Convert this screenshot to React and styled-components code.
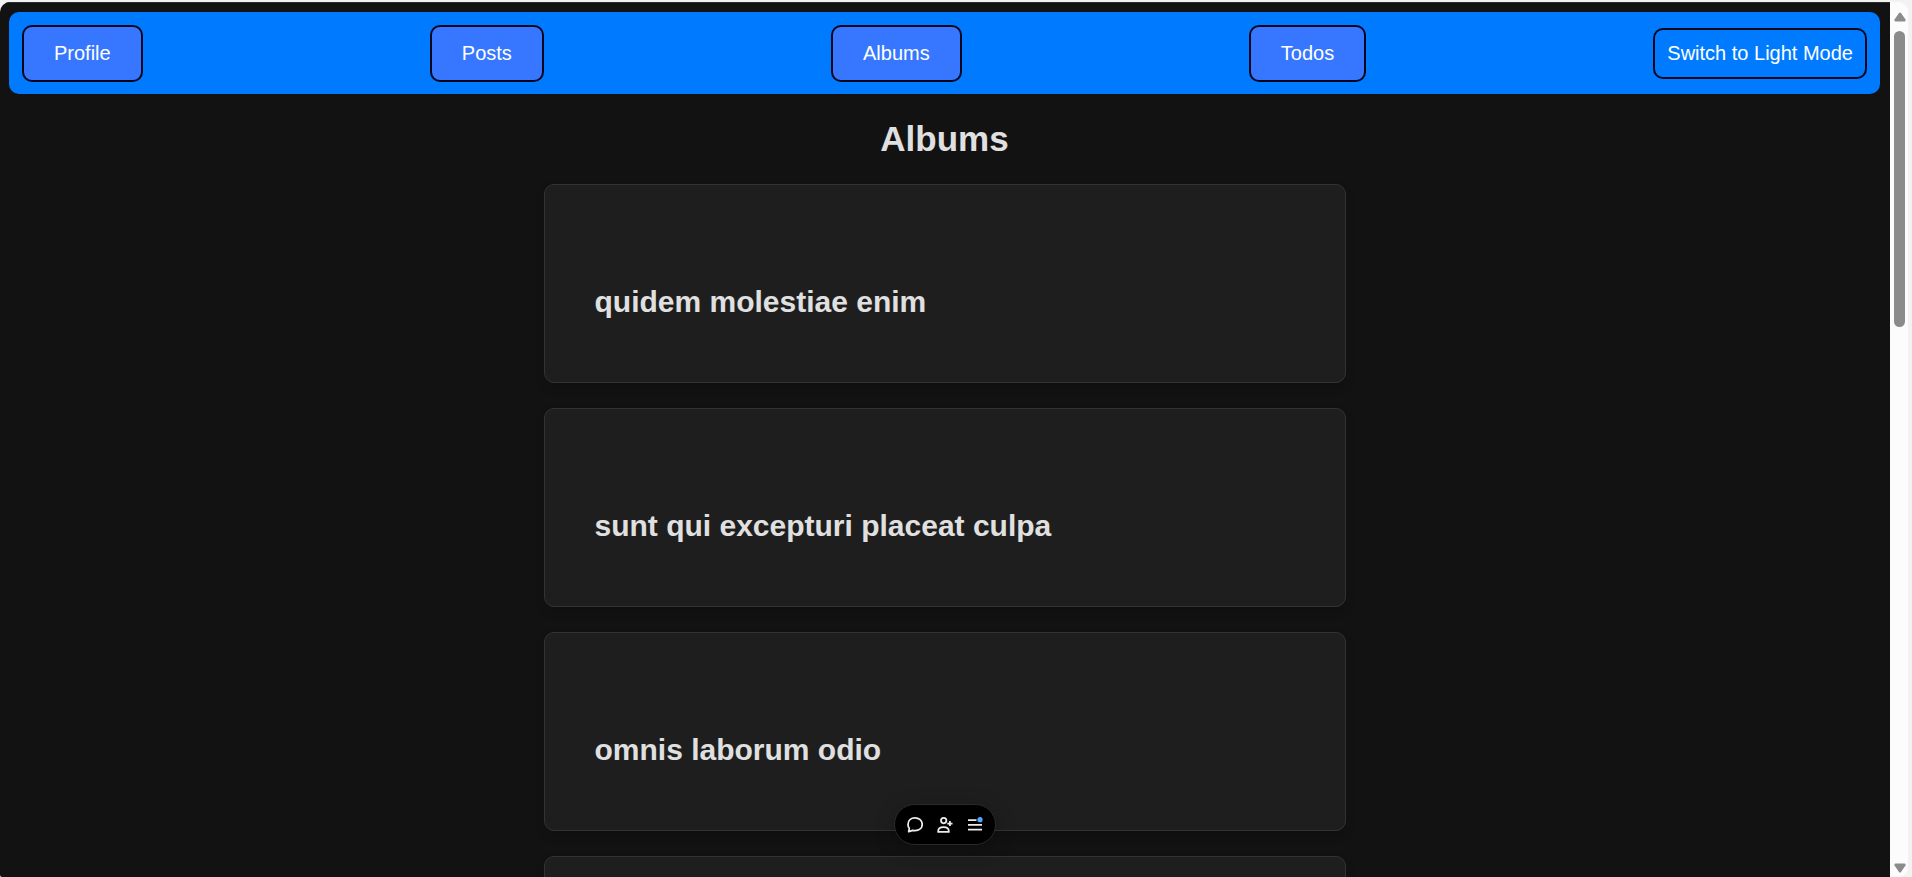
import React from "react";
import styled, { createGlobalStyle } from "styled-components";

const GlobalStyle = createGlobalStyle`
  *, *::before, *::after { box-sizing: border-box; }
  body {
    margin: 0;
    background: #f2f2f2;
    font-family: Arial, "Liberation Sans", sans-serif;
  }
`;

const Frame = styled.div`
  height: 100vh;
  padding: 2px 4px 0 0;
`;

const BrowserWindow = styled.div`
  position: relative;
  display: flex;
  height: 100%;
  overflow: hidden;
  border-radius: 10px 10px 10px 2px;
  background: #fcfcfc;
`;

const Page = styled.div`
  position: relative;
  flex: 1;
  min-width: 0;
  overflow: hidden;
  padding: 9px 10px 0 9px;
  border-top: 1px solid #2c2c2c;
  background: #121212;
  color: #e0e0e0;
`;

const NavBar = styled.nav`
  display: flex;
  align-items: center;
  justify-content: space-between;
  padding: 13px 13px 12px;
  border-radius: 10px;
  background: #007bff;
`;

const NavButton = styled.button`
  padding: ${(p) => (p.$compact ? "12px" : "15px 30px")};
  border: 2px solid #05051c;
  border-radius: 10px;
  background: ${(p) => (p.$compact ? "#007bff" : "#3777ff")};
  color: #ffffff;
  font: 20px/23px Arial, "Liberation Sans", sans-serif;
  cursor: pointer;
`;

const Heading = styled.h1`
  margin: 25px 0;
  font-size: 35px;
  line-height: 40px;
  text-align: center;
`;

const AlbumList = styled.main`
  display: grid;
  gap: 25px;
  max-width: 802px;
  margin: 0 auto;
`;

const AlbumCard = styled.article`
  padding: 50px;
  border: 1px solid #333333;
  border-radius: 10px;
  background: #1e1e1e;
  box-shadow: 0 5px 10px rgba(0, 0, 0, 0.15);
`;

const AlbumTitle = styled.h2`
  min-height: 34px;
  margin: 50px 0 13px;
  font-size: 30px;
  line-height: 34px;
`;

const FloatingTools = styled.div`
  position: absolute;
  bottom: 32px;
  left: 50%;
  transform: translateX(-50%);
  display: flex;
  align-items: center;
  gap: 2px;
  padding: 5px 6px;
  border: 1px solid #2a2a2a;
  border-radius: 21px;
  background: #000000;
  box-shadow: 0 4px 20px rgba(0, 0, 0, 0.25);
`;

const ToolButton = styled.button`
  display: grid;
  place-items: center;
  width: 28px;
  height: 29px;
  padding: 0;
  border: 0;
  background: transparent;
  color: #ededed;
`;

const ScrollTrack = styled.div`
  display: flex;
  flex-direction: column;
  align-items: center;
  width: 18px;
  padding: 10px 3px 4px 4px;
  background: #fcfcfc;
`;

const ScrollArrow = styled.svg`
  display: block;
  width: 12px;
  height: 10px;
  flex: none;
  fill: #8b8b8b;
`;

const ScrollRail = styled.div`
  flex: 1;
  width: 11px;
  margin: 9px 0;
`;

const ScrollThumb = styled.div`
  height: 36%;
  border-radius: 6px;
  background: #8b8b8b;
`;

const links = ["Profile", "Posts", "Albums", "Todos"];

const albums = [
  { id: 1, title: "quidem molestiae enim" },
  { id: 2, title: "sunt qui excepturi placeat culpa" },
  { id: 3, title: "omnis laborum odio" },
  { id: 4, title: null },
];

const stroke = { fill: "none", stroke: "currentColor", strokeWidth: 1.75 };

function CommentIcon() {
  return (
    <svg width="16" height="16" viewBox="0 0 16 16" {...stroke} strokeLinejoin="round">
      <path d="M1.700 14.700 2.300 11.300C1.300 10.200 1 8.900 1 7.400 1 3.500 4 .9 8 .9s7.200 2.600 7.200 6.400-3.100 6.300-7.200 6.300c-.8 0-1.500-.1-2.200-.2Z" />
    </svg>
  );
}

function InviteIcon() {
  return (
    <svg width="16" height="16" viewBox="0 0 16 16" {...stroke}>
      <circle cx="6.700" cy="3.600" r="2.700" />
      <path d="M1.200 14.900v-.8c0-2.500 2-4.100 5.300-4.100s5.300 1.600 5.300 4.100v.8ZM10.300 6.500h5.200M12.900 3.900v5.200" />
    </svg>
  );
}

function MenuIcon() {
  return (
    <svg width="16" height="16" viewBox="0 0 16 16" {...stroke}>
      <path d="M1 3h8.500M1 7.800h14M1 12.600h14" />
      <circle cx="13" cy="2.700" r="2.600" fill="#52a8ff" stroke="none" />
    </svg>
  );
}

export default function App() {
  return (
    <Frame>
      <GlobalStyle />
      <BrowserWindow>
        <Page>
          <NavBar>
            {links.map((label) => (
              <NavButton key={label} type="button">{label}</NavButton>
            ))}
            <NavButton $compact type="button">Switch to Light Mode</NavButton>
          </NavBar>
          <Heading>Albums</Heading>
          <AlbumList>
            {albums.map(({ id, title }) => (
              <AlbumCard key={id}>
                <AlbumTitle>{title}</AlbumTitle>
              </AlbumCard>
            ))}
          </AlbumList>
          <FloatingTools>
            <ToolButton type="button" aria-label="Comment"><CommentIcon /></ToolButton>
            <ToolButton type="button" aria-label="Invite"><InviteIcon /></ToolButton>
            <ToolButton type="button" aria-label="Menu"><MenuIcon /></ToolButton>
          </FloatingTools>
        </Page>
        <ScrollTrack aria-hidden="true">
          <ScrollArrow viewBox="0 0 12 10">
            <path d="M5 1Q6 0 7 1L11.500 7.500Q12 9.500 10.500 9.500H1.500Q0 9.500.5 7.500Z" />
          </ScrollArrow>
          <ScrollRail><ScrollThumb /></ScrollRail>
          <ScrollArrow viewBox="0 0 12 10">
            <path d="M5 9Q6 10 7 9L11.500 2.500Q12 .5 10.500 .5H1.500Q0 .5.5 2.500Z" />
          </ScrollArrow>
        </ScrollTrack>
      </BrowserWindow>
    </Frame>
  );
}
